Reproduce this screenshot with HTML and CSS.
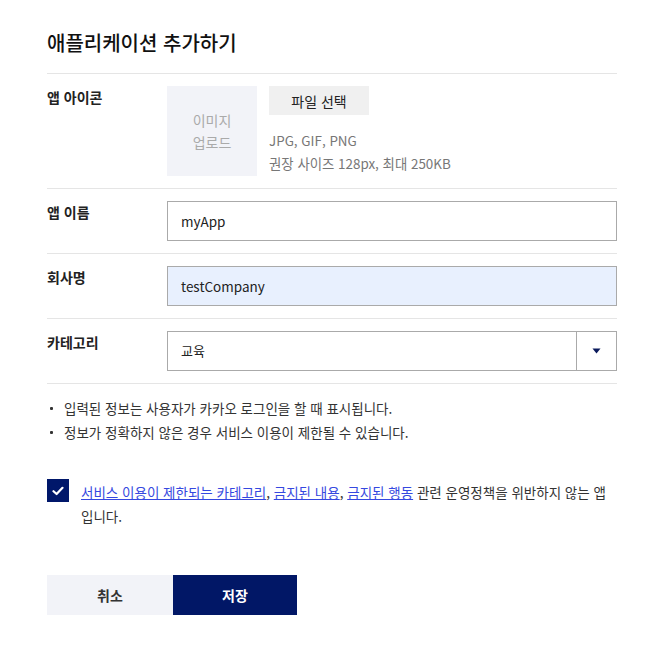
FILE: index.html
```html
<!DOCTYPE html>
<html lang="ko">
<head>
<meta charset="utf-8">
<title>애플리케이션 추가하기</title>
<link rel="stylesheet" href="styles.css">
</head>
<body>
<div class="page">
  <h1 class="title">애플리케이션 추가하기</h1>

  <div class="row row-icon">
    <div class="label">앱 아이콘</div>
    <div class="field icon-field">
      <div class="icon-box">이미지<br>업로드</div>
      <div class="icon-side">
        <button class="file-btn" type="button">파일 선택</button>
        <p class="hint">JPG, GIF, PNG<br>권장 사이즈 128px, 최대 250KB</p>
      </div>
    </div>
  </div>

  <div class="row">
    <div class="label">앱 이름</div>
    <div class="field"><div class="input">myApp</div></div>
  </div>

  <div class="row">
    <div class="label">회사명</div>
    <div class="field"><div class="input input-filled">testCompany</div></div>
  </div>

  <div class="row">
    <div class="label">카테고리</div>
    <div class="field">
      <div class="select">
        <span class="select-value">교육</span>
        <span class="select-arrow"><svg width="9" height="6" viewBox="0 0 9 6"><path d="M0.5 0.5 H8.5 L4.5 5.5 Z" fill="#0a1a5c"/></svg></span>
      </div>
    </div>
  </div>

  <ul class="notes">
    <li>입력된 정보는 사용자가 카카오 로그인을 할 때 표시됩니다.</li>
    <li>정보가 정확하지 않은 경우 서비스 이용이 제한될 수 있습니다.</li>
  </ul>

  <div class="agree">
    <span class="check"><svg width="12" height="10" viewBox="0 0 12 10"><path d="M1.5 5.2 L4.6 8 L10.5 1.8" fill="none" stroke="#fff" stroke-width="2.2" stroke-linecap="round" stroke-linejoin="round"/></svg></span>
    <p class="agree-text"><a href="#">서비스 이용이 제한되는 카테고리</a>, <a href="#">금지된 내용</a>, <a href="#">금지된 행동</a> 관련 운영정책을 위반하지 않는 앱 입니다.</p>
  </div>

  <div class="actions">
    <button class="btn btn-cancel" type="button">취소</button>
    <button class="btn btn-save" type="button">저장</button>
  </div>
</div>
</body>
</html>
```

FILE: styles.css
```css
* { box-sizing: border-box; }
html, body { margin: 0; padding: 0; background: #fff; }
body {
  font-family: "Noto Sans CJK KR", "Noto Sans", sans-serif;
  color: #222;
}
.page {
  width: 617px;
  padding-left: 47px;
}
.title {
  margin: 0;
  padding-top: 28px;
  padding-bottom: 15px;
  font-size: 20px;
  line-height: 30px;
  font-weight: 500;
  color: #111;
  border-bottom: 1px solid #e5e5e5;
}
.row {
  display: flex;
  padding: 12px 0;
  border-bottom: 1px solid #e5e5e5;
}
.label {
  width: 120px;
  flex: none;
  font-size: 14px;
  line-height: 22px;
  font-weight: 700;
  color: #222;
}
.field { flex: 1; }
.icon-field { display: flex; gap: 12px; }
.icon-box {
  width: 90px;
  height: 90px;
  background: #f2f3f8;
  color: #aaa;
  font-size: 14px;
  line-height: 22px;
  display: flex;
  align-items: center;
  justify-content: center;
  text-align: center;
}
.icon-side { display: flex; flex-direction: column; }
.file-btn {
  width: 100px;
  height: 29px;
  border: 0;
  padding: 0;
  background: #f0f0f0;
  font-family: inherit;
  font-size: 14px;
  color: #222;
}
.hint {
  margin: 14px 0 0;
  font-size: 13.4px;
  line-height: 23px;
  color: #777;
}
.input {
  height: 40px;
  border: 1px solid #aaa;
  padding: 0 13px;
  font-size: 13.5px;
  line-height: 38px;
  color: #222;
}
.input-filled { background: #e8f0fe; }
.select {
  height: 40px;
  border: 1px solid #aaa;
  display: flex;
}
.select-value {
  flex: 1;
  padding: 0 13px;
  font-size: 13px;
  line-height: 38px;
}
.select-arrow {
  width: 40px;
  border-left: 1px solid #aaa;
  display: flex;
  align-items: center;
  justify-content: center;
}
.notes {
  list-style: none;
  margin: 12px 0 0;
  padding: 0;
  font-size: 13.5px;
  line-height: 24px;
  color: #333;
}
.notes li { position: relative; padding-left: 17px; }
.notes li::before {
  content: "";
  position: absolute;
  left: 3px;
  top: 11px;
  width: 3px;
  height: 3px;
  border-radius: 1px;
  background: #333;
}
.agree {
  display: flex;
  gap: 12px;
  margin-top: 35px;
}
.check {
  flex: none;
  width: 22px;
  height: 23px;
  background: #00176a;
  display: flex;
  align-items: center;
  justify-content: center;
}
.agree-text {
  margin: 1px 0 0;
  font-size: 13.5px;
  line-height: 24px;
  color: #333;
}
.agree-text a { color: #3548e0; text-decoration: underline; }
.actions {
  display: flex;
  margin-top: 47px;
}
.btn {
  height: 40px;
  border: 0;
  padding: 0;
  font-family: inherit;
  font-size: 14px;
  font-weight: 700;
}
.btn-cancel { width: 126px; background: #f2f3f8; color: #333; }
.btn-save { width: 124px; background: #011766; color: #fff; }
```
